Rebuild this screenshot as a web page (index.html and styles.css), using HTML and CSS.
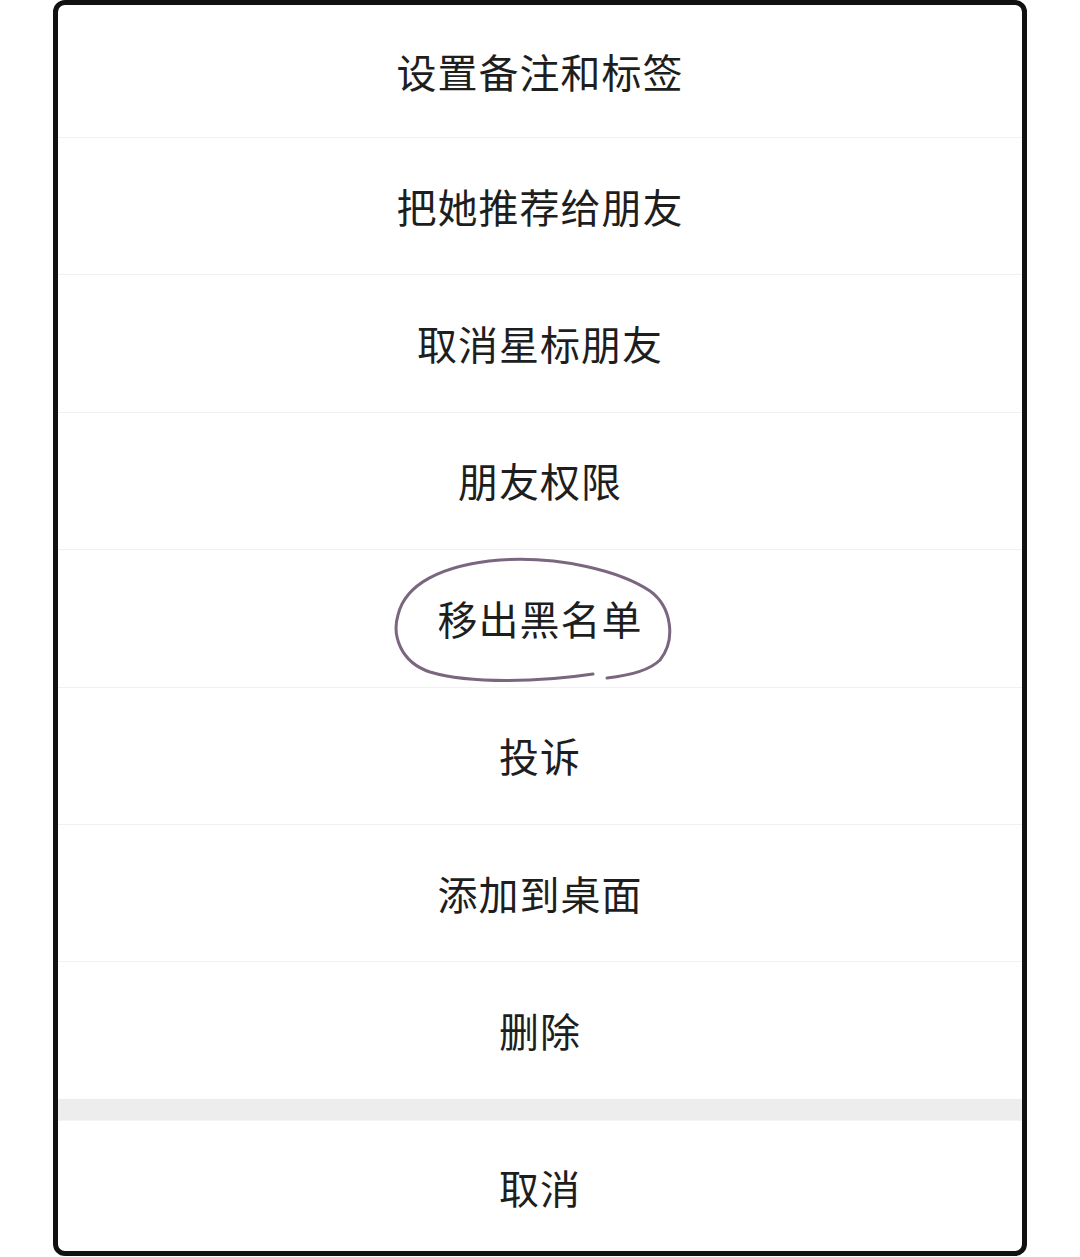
FILE: index.html
```html
<!DOCTYPE html>
<html lang="zh-CN">
<head>
    <meta charset="UTF-8">
    <meta name="viewport" content="width=device-width, initial-scale=1.0">
    <title>操作菜单</title>
    <link rel="stylesheet" href="styles.css">
</head>
<body>

<div class="frame">
    <!-- 菜单选项 -->
    <div class="menu">
        <div class="item first">设置备注和标签</div>
        <div class="item">把她推荐给朋友</div>
        <div class="item">取消星标朋友</div>
        <div class="item">朋友权限</div>
        <div class="item marked">
            移出黑名单
            <svg class="circle" viewBox="390 553 290 135" width="290" height="135">
                <path d="M 593 674 C 540 682, 470 684, 430 672 C 400 662, 392 635, 398 615 C 405 585, 440 565, 500 560 C 560 556, 620 571, 650 591 C 672 607, 676 640, 660 660 C 648 672, 625 676, 607 678" fill="none" stroke="#7b6680" stroke-width="3" stroke-linecap="round"/>
            </svg>
        </div>
        <div class="item">投诉</div>
        <div class="item">添加到桌面</div>
        <div class="item last">删除</div>
    </div>

    <!-- 分隔 -->
    <div class="gap"></div>

    <div class="item cancel">取消</div>
</div>

</body>
</html>
```

FILE: styles.css
```css
body {
    margin: 0;
    padding: 0;
    background: #ffffff;
    font-family: "Noto Sans CJK SC", "Noto Sans", sans-serif;
    color: #1e1e1e;
}
.frame {
    margin-left: 53px;
    width: 964px;
    height: 1246px;
    border: 5px solid #111111;
    border-radius: 12px;
    background: #ffffff;
    display: flex;
    flex-direction: column;
    overflow: hidden;
}
.menu {
    display: flex;
    flex-direction: column;
}
.item {
    box-sizing: border-box;
    height: 137.4px;
    padding-bottom: 1px;
    border-bottom: 1px solid #f1f1f1;
    display: flex;
    align-items: center;
    justify-content: center;
    font-size: 40px;
    line-height: 1;
    letter-spacing: 1px;
    position: relative;
}
.item.first {
    height: 133px;
}
.item.last {
    border-bottom: none;
    height: 136.6px;
}
.marked .circle {
    position: absolute;
    left: 50%;
    top: 3px;
    margin-left: -150px;
}
.gap {
    height: 21px;
    background: #ededed;
    border-bottom: 1px solid #f4f4f4;
}
.item.cancel {
    flex: 1;
    height: auto;
    border-bottom: none;
    padding-bottom: 0;
    padding-top: 3px;
}
```
